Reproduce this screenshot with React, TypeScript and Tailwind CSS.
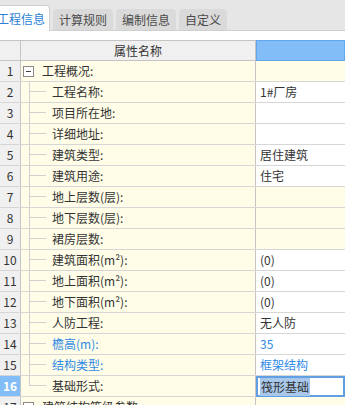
import React from 'react'

interface Row {
  no: number
  name: string
  value?: string
  group?: boolean
  blue?: boolean
  yellowValue?: boolean
  selected?: boolean
  last?: boolean
}

const rows: Row[] = [
  { no: 1, name: '工程概况:', group: true, yellowValue: true },
  { no: 2, name: '工程名称:', value: '1#厂房' },
  { no: 3, name: '项目所在地:' },
  { no: 4, name: '详细地址:' },
  { no: 5, name: '建筑类型:', value: '居住建筑' },
  { no: 6, name: '建筑用途:', value: '住宅' },
  { no: 7, name: '地上层数(层):', yellowValue: true },
  { no: 8, name: '地下层数(层):', yellowValue: true },
  { no: 9, name: '裙房层数:', yellowValue: true },
  { no: 10, name: '建筑面积(m²):', value: '(0)' },
  { no: 11, name: '地上面积(m²):', value: '(0)' },
  { no: 12, name: '地下面积(m²):', value: '(0)' },
  { no: 13, name: '人防工程:', value: '无人防' },
  { no: 14, name: '檐高(m):', value: '35', blue: true },
  { no: 15, name: '结构类型:', value: '框架结构', blue: true },
  { no: 16, name: '基础形式:', value: '筏形基础', selected: true, last: true },
  { no: 17, name: '建筑结构等级参数:', group: true, yellowValue: true },
]

const tabs = ['计算规则', '编制信息', '自定义']

function Toggle() {
  return (
    <div className="w-[11px] h-[11px] border border-[#8a8a8a] bg-white flex items-center justify-center shrink-0">
      <div className="w-[5px] h-px bg-[#444]" />
    </div>
  )
}

export default function App() {
  return (
    <div
      className="w-[345px] h-[405px] overflow-hidden bg-white text-[12px] text-[#333]"
      style={{ fontFamily: '"Noto Sans CJK SC", "Noto Sans", sans-serif' }}
    >
      {/* 标签栏 */}
      <div className="h-[31px] bg-[#e6e6e6] border-b border-[#cfcfcf] flex items-end">
        <div className="ml-[-10px] w-[60px] h-[26px] mb-[-1px] bg-white border border-b-0 border-[#cfcfcf] rounded-tr-[4px] flex items-center pl-[6px] text-[#2b7fd6] leading-none">
          工程信息
        </div>
        {tabs.map(t => (
          <div
            key={t}
            className="ml-[3px] h-[21px] px-[6px] bg-[#dadada] rounded-t-[4px] flex items-center text-[#4a4a4a] leading-none"
          >
            {t}
          </div>
        ))}
      </div>

      <div className="h-[9px]" />

      {/* 表头 */}
      <div className="flex h-[21px] border-y border-[#c4c4c4]">
        <div className="w-[21px] shrink-0 bg-[#f0f0f0] border-r border-[#c4c4c4]" />
        <div className="w-[235px] shrink-0 bg-[#f0f0f0] border-r border-[#c4c4c4] flex items-center justify-center">
          属性名称
        </div>
        <div className="flex-1 bg-[#82bdf8] border border-[#62a6ee] -my-px" />
      </div>

      {/* 行 */}
      {rows.map(r => {
        const color = r.blue ? 'text-[#2f8ae6]' : 'text-[#333]'
        return (
          <div key={r.no} className="flex h-[21px] border-b border-[#d6d6d6]">
            <div
              className={`w-[21px] shrink-0 border-r border-[#c4c4c4] flex items-center justify-center ${
                r.selected ? 'bg-[#82bdf8] text-white font-bold' : 'bg-[#f0f0f0] text-[#333]'
              }`}
            >
              {r.no}
            </div>
            <div className={`w-[235px] shrink-0 bg-[#fffde8] border-r border-[#c4c4c4] flex items-center ${color}`}>
              {r.group ? (
                <>
                  <div className="ml-[2px]">
                    <Toggle />
                  </div>
                  <span className="ml-[8px] whitespace-nowrap">{r.name}</span>
                </>
              ) : (
                <>
                  <div className="ml-[8px] w-[17px] h-[21px] -mt-px flex flex-col shrink-0">
                    <div className="h-[11px] border-l border-b border-[#d0d0d0]" />
                    <div className={`flex-1 ${r.last ? '' : 'border-l border-[#d0d0d0]'}`} />
                  </div>
                  <span className="ml-[6px] whitespace-nowrap">{r.name}</span>
                </>
              )}
            </div>
            {r.selected ? (
              <div className="flex-1 -mb-px border-2 border-[#5f9fe2] bg-white flex items-center pl-[2px]">
                <span className="bg-[#a9c9ec] text-[#333] px-px">{r.value}</span>
              </div>
            ) : (
              <div className={`flex-1 flex items-center pl-[4px] ${r.yellowValue ? 'bg-[#fffde8]' : 'bg-white'} ${color}`}>
                {r.value}
              </div>
            )}
          </div>
        )
      })}
    </div>
  )
}
